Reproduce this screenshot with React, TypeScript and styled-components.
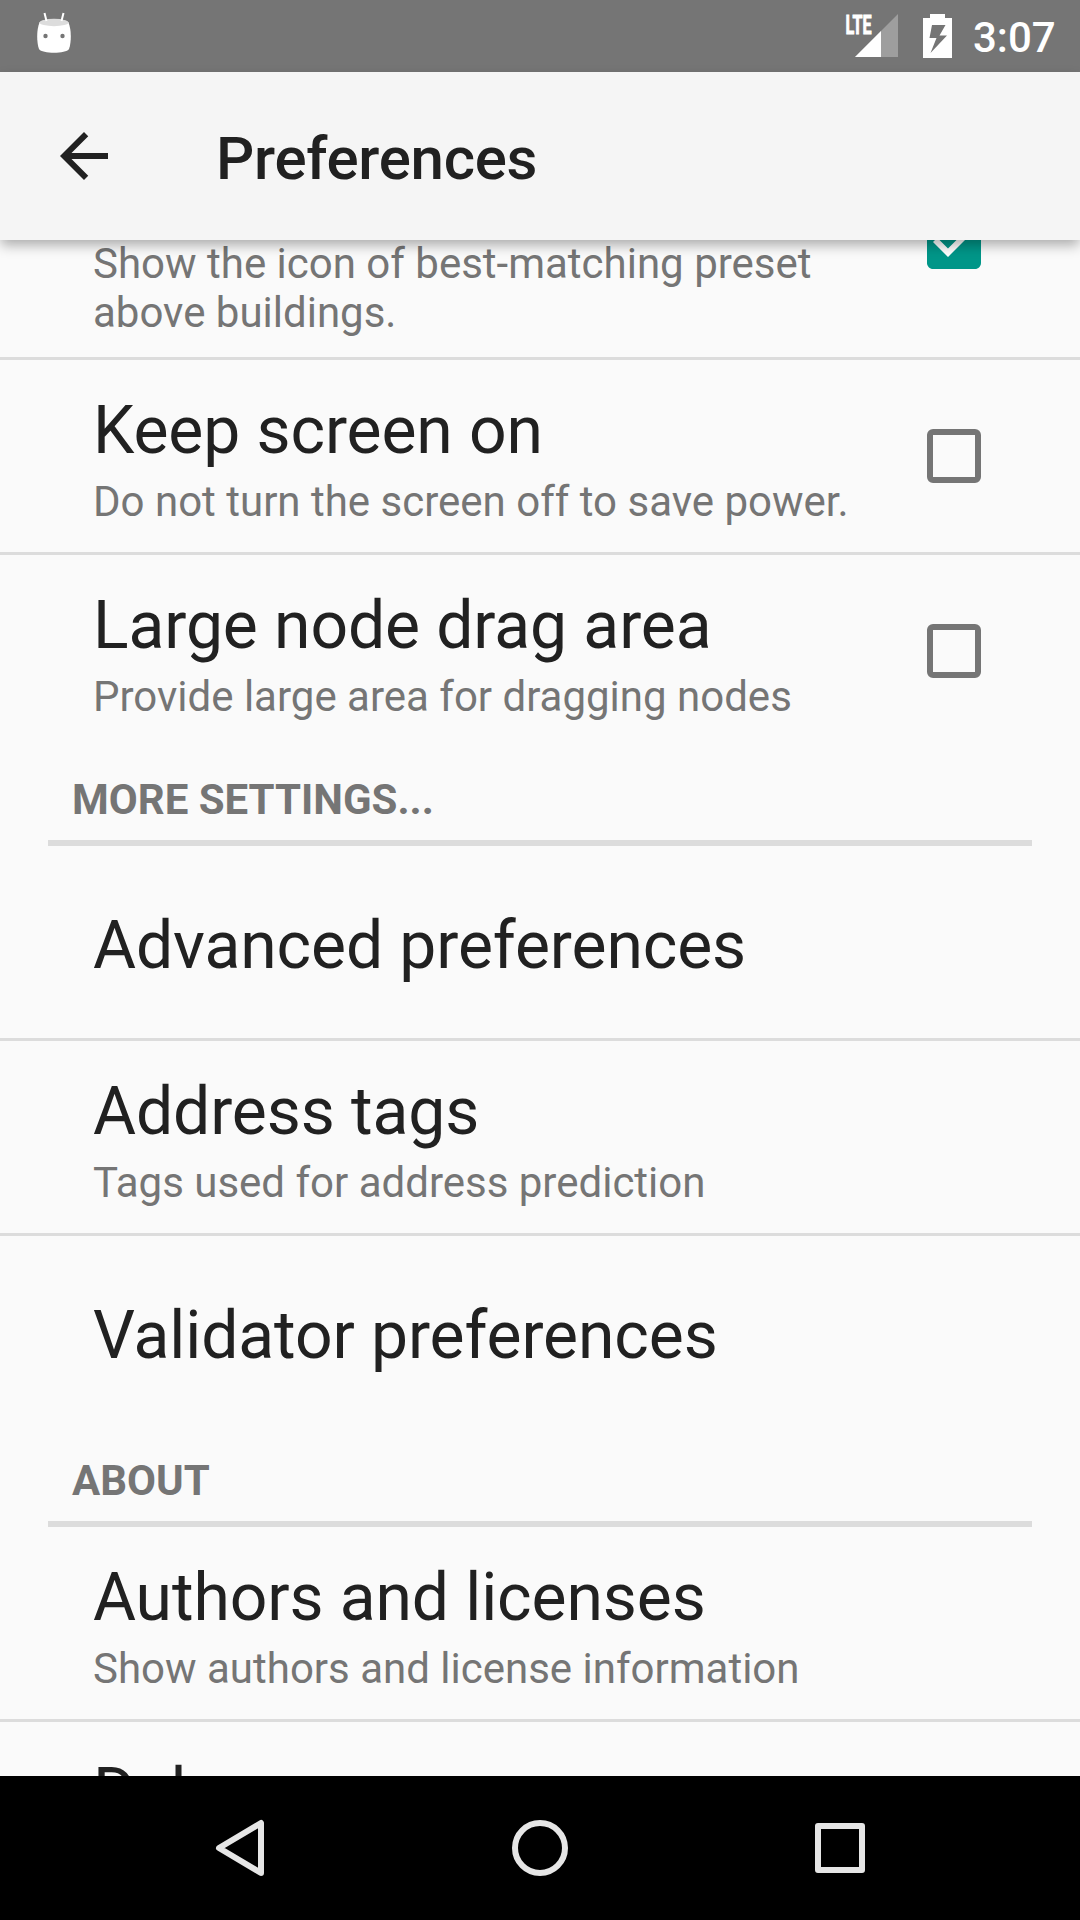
import React from "react";
import styled, { createGlobalStyle } from "styled-components";

const GlobalStyle = createGlobalStyle`
  * { box-sizing: border-box; }
  body { margin: 0; background: #fafafa; }
`;

const Screen = styled.div`
  width: 1080px;
  height: 1920px;
  display: flex;
  flex-direction: column;
  overflow: hidden;
  background: #fafafa;
  font-family: Roboto, "Liberation Sans", sans-serif;
  color: #212121;
`;

const StatusBar = styled.header`
  flex: none;
  height: 72px;
  padding: 0 24px 0 36px;
  display: flex;
  align-items: center;
  background: #757575;
  color: #fff;
`;

const StatusIcons = styled.div`
  margin-left: auto;
  display: flex;
  align-items: center;
`;

const Clock = styled.time`
  width: 83px;
  margin-left: 21px;
  font-size: 42px;
  font-weight: 500;
  line-height: 50px;
  padding-top: 4px;
`;

const Toolbar = styled.div`
  flex: none;
  position: relative;
  z-index: 1;
  height: 168px;
  padding-left: 48px;
  display: flex;
  align-items: center;
  gap: 96px;
  background: #f5f5f5;
  box-shadow: 0 6px 12px -1px rgba(0, 0, 0, 0.32);
`;

const BackButton = styled.button`
  width: 72px;
  height: 72px;
  padding: 0;
  border: 0;
  background: none;
  color: #212121;
`;

const ToolbarTitle = styled.h1`
  margin: 0;
  padding-top: 6px;
  font-size: 60px;
  font-weight: 500;
  line-height: 70px;
  letter-spacing: -0.28px;
`;

const List = styled.main`
  flex: 1;
  min-height: 0;
  overflow: hidden;
`;

const Scrolled = styled.div`
  margin-top: -113px;
`;

const Row = styled.section<{ $tall?: boolean; $last?: boolean }>`
  height: ${(p) => (p.$tall ? 230 : 192) + (p.$last ? 0 : 3)}px;
  padding: 0 99px 0 93px;
  display: flex;
  align-items: center;
  justify-content: space-between;
  border-bottom: ${(p) => (p.$last ? "none" : "3px solid #dcdcdc")};
`;

const RowText = styled.div<{ $tall?: boolean; $single?: boolean }>`
  width: 760px;
  height: 100%;
  display: flex;
  flex-direction: column;
  justify-content: ${(p) => (p.$tall ? "flex-end" : "center")};
  padding: ${(p) => (p.$tall ? "0 0 20px" : p.$single ? "7px 0 0" : "6px 0 0")};
`;

const RowTitle = styled.h2`
  margin: 0;
  font-size: 66px;
  font-weight: 400;
  line-height: 77px;
  letter-spacing: -0.1px;
`;

const Summary = styled.p`
  margin: 0;
  min-height: 57px;
  padding-top: 8px;
  font-size: 42px;
  line-height: 49px;
  color: #757575;
`;

const Box = styled.span`
  flex: none;
  width: 54px;
  height: 54px;
  border: 6px solid #757575;
  border-radius: 6px;
`;

const Tick = styled.svg`
  flex: none;
  width: 54px;
  height: 54px;
  fill: #009688;
`;

const Category = styled.h3`
  height: 99px;
  margin: 0 48px;
  padding: 28px 24px 0;
  border-bottom: 6px solid #dcdcdc;
  font-size: 42px;
  font-weight: 700;
  line-height: 49px;
  color: #757575;
`;

const NavBar = styled.nav`
  flex: none;
  height: 144px;
  padding: 0 90px;
  display: grid;
  grid-template-columns: repeat(3, 1fr);
  align-items: center;
  justify-items: center;
  background: #000;
`;

const NavIcon = styled.svg`
  width: 60px;
  height: 60px;
  fill: none;
  stroke: #e6e6e6;
  stroke-width: 6;
  stroke-linejoin: round;
`;

type PreferenceProps = {
  title?: string;
  summary?: string;
  checked?: boolean;
  tall?: boolean;
  last?: boolean;
};

function Preference({ title, summary, checked, tall, last }: PreferenceProps) {
  return (
    <Row $tall={tall} $last={last}>
      <RowText $tall={tall} $single={summary === undefined}>
        {title && <RowTitle>{title}</RowTitle>}
        {summary !== undefined && <Summary>{summary}</Summary>}
      </RowText>
      {checked === true && (
        <Tick viewBox="3 3 18 18">
          <path d="M19 3H5c-1.110 0-2 .9-2 2v14c0 1.100.89 2 2 2h14c1.110 0 2-.9 2-2V5c0-1.100-.89-2-2-2z" />
          <path fill="#fff" d="M10 17l-5-5 1.410-1.410L10 14.170l7.590-7.590L19 8z" />
        </Tick>
      )}
      {checked === false && <Box />}
    </Row>
  );
}

export default function App() {
  return (
    <Screen>
      <GlobalStyle />
      <StatusBar>
        <svg width="36" height="48" viewBox="36 12 36 48">
          <path
            fill="#fff"
            d="M39.500 22.500C43 18 65 18 68.500 22.500C71.500 30 71.500 42 69 49C66 54 42 54 39 49C36.500 42 36.500 30 39.500 22.500Z"
          />
          <ellipse cx="54" cy="22.500" rx="14.500" ry="3.700" fill="#dcdcdc" />
          <path d="M44.500 13L46.500 21M63.500 13L61.500 21" stroke="#fff" strokeWidth="2" />
          <circle cx="45.500" cy="36" r="2.200" fill="#757575" />
          <circle cx="62.500" cy="36" r="2.200" fill="#757575" />
        </svg>
        <StatusIcons>
          <svg width="108" height="64" viewBox="844 4 108 64">
            <path d="M898 14V57H855Z" fill="#fff" fillOpacity="0.3" />
            <path d="M881 31V57H855Z" fill="#fff" />
            <text
              x="845.5"
              y="33.6"
              fontSize="25"
              fontWeight="700"
              fill="#fff"
              stroke="#fff"
              strokeWidth="0.9"
              textLength="26"
              lengthAdjust="spacingAndGlyphs"
            >
              LTE
            </text>
            <path
              fill="#fff"
              fillRule="evenodd"
              d="M930 14H945V18H952V58H923V18H930ZM932 25L929.500 38H936.500L930.500 53L947 35.500H939.500L945.500 25Z"
            />
          </svg>
          <Clock>3:07</Clock>
        </StatusIcons>
      </StatusBar>
      <Toolbar>
        <BackButton aria-label="Back">
          <svg width="72" height="72" viewBox="0 0 24 24" fill="currentColor">
            <path d="M20 11H7.830l5.590-5.590L12 4l-8 8 8 8 1.410-1.410L7.830 13H20v-2z" />
          </svg>
        </BackButton>
        <ToolbarTitle>Preferences</ToolbarTitle>
      </Toolbar>
      <List>
        <Scrolled>
          <Preference
            tall
            checked
            summary="Show the icon of best-matching preset above buildings."
          />
          <Preference
            title="Keep screen on"
            summary="Do not turn the screen off to save power."
            checked={false}
          />
          <Preference
            last
            title="Large node drag area"
            summary="Provide large area for dragging nodes"
            checked={false}
          />
          <Category>MORE SETTINGS...</Category>
          <Preference title="Advanced preferences" />
          <Preference title="Address tags" summary="Tags used for address prediction" />
          <Preference last title="Validator preferences" />
          <Category>ABOUT</Category>
          <Preference
            title="Authors and licenses"
            summary="Show authors and license information"
          />
          <Preference title="Debug" summary="" />
        </Scrolled>
      </List>
      <NavBar>
        <NavIcon viewBox="210 1818 60 60">
          <path d="M261 1823V1873L219 1848Z" />
        </NavIcon>
        <NavIcon viewBox="510 1818 60 60">
          <circle cx="540" cy="1848" r="25" />
        </NavIcon>
        <NavIcon viewBox="810 1818 60 60">
          <rect x="818" y="1826" width="44" height="44" />
        </NavIcon>
      </NavBar>
    </Screen>
  );
}
